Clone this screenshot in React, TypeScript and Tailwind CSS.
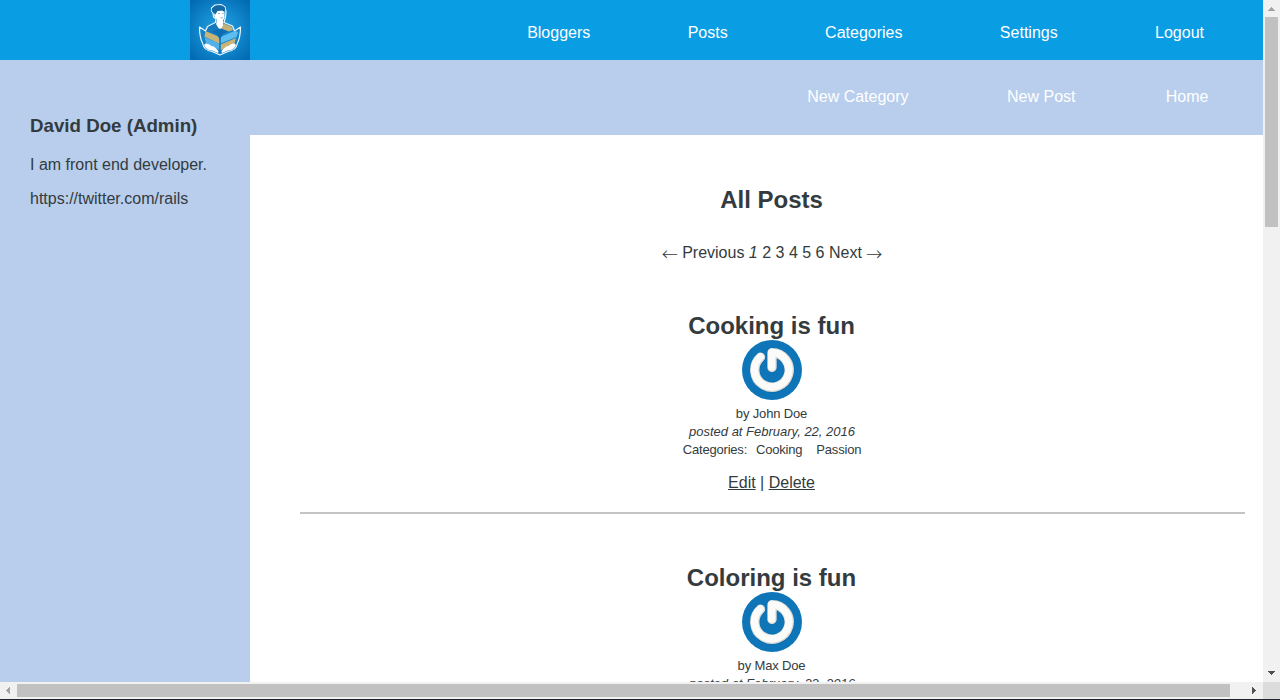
import React from "react";

function Logo() {
  return (
    <svg width="60" height="60" viewBox="0 0 60 60" className="block shrink-0">
      <defs>
        <radialGradient id="logoBg" cx="50%" cy="50%" r="68%">
          <stop offset="0" stopColor="#2ba3e2" />
          <stop offset="0.5" stopColor="#1288cd" />
          <stop offset="1" stopColor="#0068b0" />
        </radialGradient>
      </defs>
      <rect width="60" height="60" fill="url(#logoBg)" />
      <path d="M9.5 27 L15.500 31 L17.500 26.500 L25.500 22.500 L26 19 L23.500 17 L23 13 L21.500 11 L21.500 8 L25 5 L31 4.500 L35 7 L36 12 L35.500 17 L34 22.500 L42.500 26 L44.500 31 L50.500 27 C50.500 34 49.500 39 47.500 43 C46.500 48 43 51 38 51.500 L30 55 L22 51.500 C17 51 13.500 48 12.500 43 C10.500 39 9.500 34 9.500 27 Z" fill="#1583c6" stroke="#eef8ff" strokeWidth="1.200" strokeLinejoin="round" />
      <path d="M24 11 L34.500 10 L34.500 17.500 L33 20.500 L33.500 26 L30 30 L26 25 L27 19.500 L24.500 17 Z" fill="#fff" />
      <path d="M21.800 11 C20.500 7 26 5 31 5.500 C35 6 36 9 34.500 12 L32 10.500 L27.500 11 L25.500 14.500 Z" fill="#1768a2" />
      <path d="M28 13.500h2M32 13.500h1.500M30.500 17.800h2.500" stroke="#3a83b6" strokeWidth=".6" />
      <path d="M18.300 27 L25.500 23.200 L29 29.500 L23 31.500 Z" fill="#1679bd" />
      <path d="M16 31.500 L20 28 L28 30.500 L29 36 L24.500 34.500 Z" fill="#1679bd" />
      <path d="M31 28.500 L34.500 23.700 L41.500 26.700 L43 30 L38.500 31.500 Z" fill="#c3b278" />
      <path d="M15.500 31 L29.500 37 V44 L14.500 36.500 Z" fill="#c9b477" />
      <path d="M45.500 30.500 L30.500 37 V43.500 L46.500 37 L48 32.500 Z" fill="#5ebdf0" />
      <path d="M14.500 37 L29.500 44 V50 L16 43 Z" fill="#4fb3ea" />
      <path d="M46 38 L30.500 44.500 V50.500 L44.500 43.500 Z" fill="#c9b477" />
      <path d="M23 31.500 L30 28.500 L38.500 31.500 L32.500 34 L30 40 L27 34.500 Z" fill="#0c6db2" />
      <path d="M30 36V53" stroke="#0c6db2" strokeWidth="1" />
      <path d="M15.500 43.500 Q19 43 21.500 46 Q25 46 28.500 51.500 L28 53 L22 50.500 Q16 50 14 45 Z M44.500 43.500 Q41 43 38.500 46 Q35 46 31.500 51.500 L32 53 L38 50.500 Q44 50 46 45 Z" fill="#fff" />
    </svg>
  );
}

function Avatar() {
  return (
    <svg width="60" height="60" viewBox="0 0 60 60" className="block">
      <circle cx="30" cy="30" r="30" fill="#0d75b8" />
      <g fill="none" strokeLinecap="round">
        <path d="M18.500 17.200 A17.200 17.200 0 1 0 30 12.800 V27.500" stroke="#07578d" strokeWidth="9.400" strokeOpacity=".3" strokeLinejoin="round" transform="translate(.5 .8)" />
        <path d="M18.500 17.200 A17.200 17.200 0 1 0 30 12.800 V27.500" stroke="#dadad7" strokeWidth="9.400" strokeLinejoin="round" />
        <path d="M18.200 16.900 A17.200 17.200 0 1 0 29.700 12.500 V27" stroke="#fbfbf9" strokeWidth="7.400" strokeLinejoin="round" />
      </g>
    </svg>
  );
}

function Post({ title, author, categories }: { title: string; author: string; categories: string[] }) {
  return (
    <article className="flex h-[252px] flex-col items-center border-b-2 border-[#c4c4c4] pt-[50px] pr-px">
      <h2 className="h-[28px] pr-px text-[24px] leading-[28px] font-bold">{title}</h2>
      <Avatar />
      <div className="mt-[5px] flex flex-col items-center text-[13px] leading-[18px]">
        <p className="pr-px tracking-[-0.15px]">by {author}</p>
        <p className="italic">posted at February, 22, 2016</p>
        <p className="flex tracking-[-0.2px]">
          <span>Categories:</span>
          <span className="ml-[9px]">{categories[0]}</span>
          <span className="ml-[14px]">{categories[1]}</span>
        </p>
      </div>
      <p className="mt-[15px] pr-px text-[16px] leading-[18px]">
        <a className="underline">Edit</a> | <a className="underline">Delete</a>
      </p>
    </article>
  );
}

export default function App() {
  return (
    <div className="flex h-[700px] w-[1280px] flex-col overflow-hidden bg-white font-['Liberation_Sans',Arial,sans-serif] text-[16px] text-[#333b3e]">
      <div className="flex h-[682px]">
        <div className="flex w-[1263px] flex-col overflow-hidden">
          <header className="flex h-[60px] shrink-0 items-center bg-[#099de4] pr-[59px] pl-[190px] text-white">
            <Logo />
            <nav className="mt-[5px] ml-auto flex gap-[97.400px]">
              <a>Bloggers</a>
              <a>Posts</a>
              <a>Categories</a>
              <a>Settings</a>
              <a>Logout</a>
            </nav>
          </header>
          <div className="flex h-[622px]">
            <aside className="w-[250px] shrink-0 bg-[#b8ceec] pt-[55px] pl-[30px]">
              <h3 className="text-[18.720px] leading-[22px] font-bold">David Doe (Admin)</h3>
              <p className="mt-[19px] leading-[18px]">I am front end developer.</p>
              <p className="mt-[16px] leading-[18px]">https://twitter.com/rails</p>
            </aside>
            <div className="flex w-[1013px] flex-col">
              <nav className="flex h-[75px] shrink-0 items-center justify-end bg-[#b8ceec] pr-[54.600px] pb-[2px] text-white">
                <a>New Category</a>
                <a className="ml-[98.500px]">New Post</a>
                <a className="ml-[90.200px]">Home</a>
              </nav>
              <main className="min-h-0 flex-1 overflow-hidden pr-[18px] pl-[50px]">
                <h2 className="mt-[51px] pr-[2px] text-center text-[24px] leading-[28px] font-bold">All Posts</h2>
                <p className="mt-[30px] flex h-[18px] justify-center gap-[4.400px] pr-px leading-[18px]">
                  <span className="font-['Noto_Sans_CJK_JP',sans-serif] font-light">←</span>
                  <span>
                    Previous <em>1</em> 2 3 4 5 6 Next
                  </span>
                  <span className="font-['Noto_Sans_CJK_JP',sans-serif] font-light">→</span>
                </p>
                <Post title="Cooking is fun" author="John Doe" categories={["Cooking", "Passion"]} />
                <Post title="Coloring is fun" author="Max Doe" categories={["Coloring", "Passion"]} />
              </main>
            </div>
          </div>
        </div>
        <div className="flex w-[17px] flex-col items-center bg-[#f1f1f1]">
          <svg width="17" height="17" className="block shrink-0"><path d="M5 11V10h1V9h1V8h1V7h1v1h1v1h1v1h1v1z" fill="#a3a3a3" /></svg>
          <div className="h-[210px] w-[13px] bg-[#c1c1c1]" />
          <svg width="17" height="17" className="mt-auto block shrink-0"><path d="M5 6h7v1h-1v1h-1v1H9v1H8V9H7V8H6V7H5z" fill="#505050" /></svg>
        </div>
      </div>
      <div className="flex h-[17px] items-center bg-[#f1f1f1]">
        <svg width="17" height="17" className="block shrink-0"><path d="M10 5v7H9v-1H8v-1H7V9H6V8h1V7h1V6h1V5z" fill="#a3a3a3" /></svg>
        <div className="h-[13px] w-[1213px] bg-[#c1c1c1]" />
        <svg width="17" height="17" className="ml-auto block shrink-0"><path d="M6 5v7h1v-1h1v-1h1V9h1V8H9V7H8V6H7V5z" fill="#505050" /></svg>
        <div className="h-[17px] w-[17px] bg-[#dcdcdc]" />
      </div>
      <div className="h-px bg-[#22222e]" />
    </div>
  );
}
